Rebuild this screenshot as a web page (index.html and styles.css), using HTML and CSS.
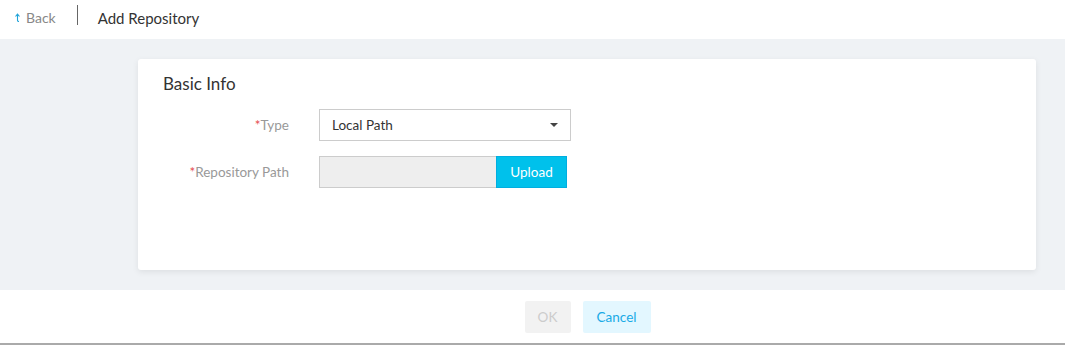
FILE: index.html
```html
<!DOCTYPE html>
<html lang="en">
<head>
  <meta charset="UTF-8" />
  <title>Add Repository</title>
  <link rel="stylesheet" href="styles.css">
</head>
<body>
  <div class="topbar">
    <a class="back" href="#">
      <svg width="7" height="9" viewBox="0 0 7 9"><path d="M3.5 1.5 L3.5 7.5 Q3.5 8.5 5 8.5 M1.5 3.5 L3.5 1.2 L5.5 3.5" fill="none" stroke="#1fa3d9" stroke-width="1.1"/></svg>
      Back
    </a>
    <span class="divider"></span>
    <span class="title">Add Repository</span>
  </div>

  <div class="content">
    <div class="card">
      <h2>Basic Info</h2>
      <div class="form">
        <div class="row">
          <label><span class="req">*</span>Type</label>
          <div class="select">
            <span>Local Path</span>
            <span class="caret"></span>
          </div>
        </div>
        <div class="row">
          <label><span class="req">*</span>Repository Path</label>
          <div class="upload">
            <div class="path"></div>
            <button type="button" class="btn-upload">Upload</button>
          </div>
        </div>
      </div>
    </div>
  </div>

  <div class="footer">
    <button type="button" class="btn btn-ok" disabled>OK</button>
    <button type="button" class="btn btn-cancel">Cancel</button>
  </div>
</body>
</html>
```

FILE: styles.css
```css
* {
  box-sizing: border-box;
  margin: 0;
  padding: 0;
  font-family: Lato, 'Noto Sans', sans-serif;
}

body {
  background: #fff;
  color: #333;
  width: 1065px;
}

.topbar {
  height: 39px;
  display: flex;
  align-items: center;
  padding-left: 14px;
  padding-bottom: 4px;
  background: #fff;
}

.back {
  display: flex;
  align-items: center;
  gap: 5px;
  color: #888;
  font-size: 14px;
  text-decoration: none;
}

.divider {
  width: 1px;
  height: 20px;
  background: #666;
  margin: 0 20px 0 21px;
  position: relative;
  top: -3px;
}

.title {
  font-size: 15px;
  color: #333;
}

.content {
  background: #eff2f5;
  padding: 20px 29px 20px 138px;
  height: 251px;
}

.card {
  background: #fff;
  border-radius: 3px;
  box-shadow: 0 2px 6px rgba(0, 0, 0, 0.08);
  height: 211px;
  padding: 14px 25px;
}

.card h2 {
  font-size: 17px;
  font-weight: normal;
  color: #333;
  margin-bottom: 15px;
}

.form {
  display: flex;
  flex-direction: column;
  gap: 15px;
}

.row {
  display: flex;
  align-items: center;
}

.row label {
  width: 126px;
  text-align: right;
  font-size: 13.5px;
  color: #999;
  margin-right: 30px;
}

.req {
  color: #e5484d;
}

.select {
  width: 252px;
  height: 32px;
  border: 1px solid #ccc;
  display: flex;
  align-items: center;
  justify-content: space-between;
  padding: 0 12px;
  font-size: 13.5px;
  color: #333;
}

.caret {
  width: 0;
  height: 0;
  border-left: 4px solid transparent;
  border-right: 4px solid transparent;
  border-top: 4px solid #444;
}

.upload {
  display: flex;
  height: 32px;
}

.path {
  width: 177px;
  background: #eeeeee;
  border: 1px solid #ccc;
  border-right: none;
}

.btn-upload {
  width: 71px;
  background: #00c1eb;
  border: 1px solid #00aee0;
  color: #fff;
  font-size: 13.5px;
}

.footer {
  height: 55px;
  border-bottom: 2px solid #aaa;
  display: flex;
  justify-content: center;
  align-items: center;
  gap: 12px;
  padding-left: 110px;
}

.btn {
  height: 32px;
  border: none;
  border-radius: 2px;
  font-size: 13.5px;
}

.btn-ok {
  width: 46px;
  background: #f2f2f2;
  color: #ccc;
}

.btn-cancel {
  width: 68px;
  background: #e3f7ff;
  color: #18aae6;
}
```
